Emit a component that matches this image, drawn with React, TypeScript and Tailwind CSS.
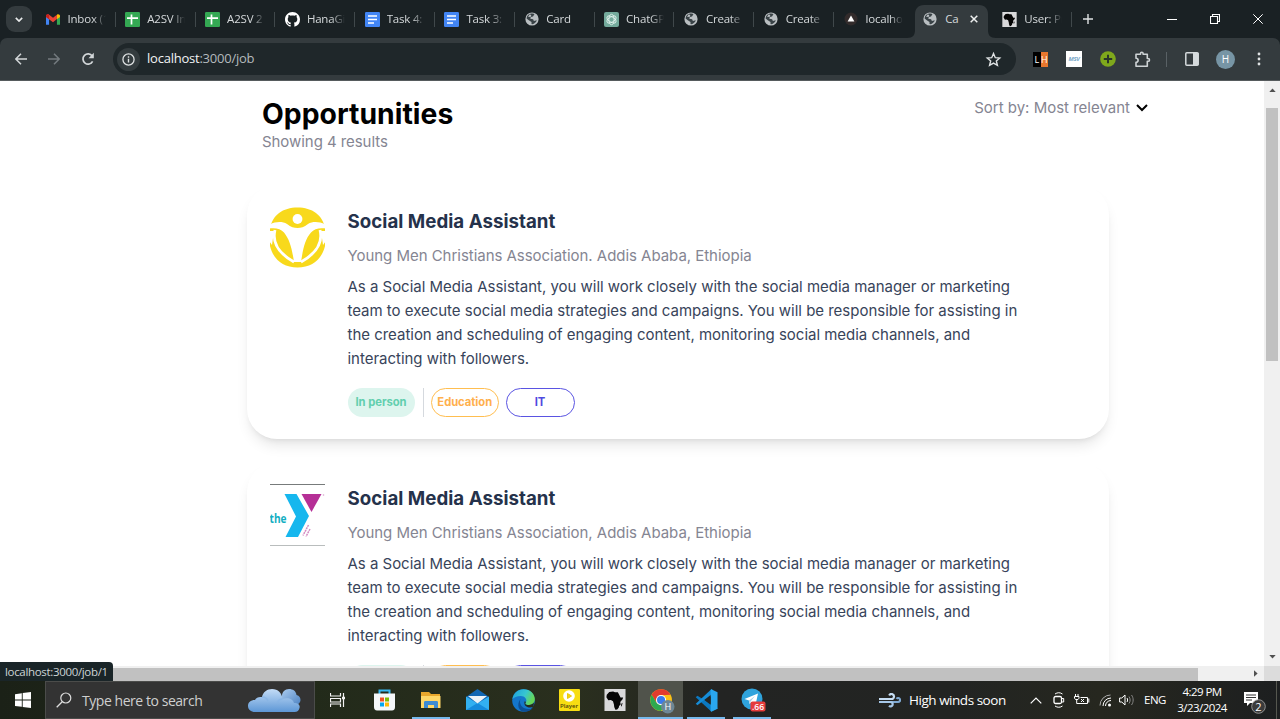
import React from 'react';
import type { ReactNode } from 'react';

const AFRICA =
  'M5 3.2 9 2.6l2 .9 3-.2 1.2 2.5 1.6 3 2.7.2-.6 1.8-2.4 2.8.4 2.6-1.7 1.5-.2 1.6-1.7 2.2-1.9.3-1.2-3-.3-2.7-1-3.4-2.2-1.2-2.7.3L2 8.6 2.4 6z';

const Africa = ({ className }: { className: string }) => (
  <svg viewBox="0 0 22 23" className={className}>
    <rect width="22" height="23" fill="#d9d9db" />
    <path d={AFRICA} fill="#050505" />
    <path d="M17.6 15.5l1.3-1-.7 3.3-.9.4z" fill="#050505" />
  </svg>
);

const Gmail = () => (
  <svg viewBox="0 0 16 12" className="h-[11px] w-[14px]">
    <path d="M0 2v10h3.5V5z" fill="#4285f4" />
    <path d="M12.5 5v7H16V2z" fill="#34a853" />
    <path d="M0 2C0 .3 2-.6 3.5.5L8 4 12.5.5v5L8 9 0 3.2z" fill="#ea4335" />
    <path d="M12.5.5C14-.6 16 .3 16 2v1.2l-3.5 2.6z" fill="#fbbc04" />
    <path d="M0 2v1.2l3.5 2.6V.5C2-.6 0 .3 0 2z" fill="#c5221f" />
  </svg>
);

const Sheet = () => (
  <svg viewBox="0 0 15 15" className="size-[15px]">
    <rect width="15" height="15" rx="1.2" fill="#34a853" />
    <path d="M6.5 2.5v10M2 6.2h11" stroke="#fff" strokeWidth="1.7" />
  </svg>
);

const Doc = () => (
  <svg viewBox="0 0 15 15" className="size-[15px]">
    <rect width="15" height="15" rx="1.2" fill="#4285f4" />
    <path d="M3 4h9M3 7.5h9M3 11h6" stroke="#fff" strokeWidth="1.7" />
  </svg>
);

const Github = () => (
  <svg viewBox="0 0 16 16" className="size-[15px]">
    <path
      fill="#fff"
      d="M8 0C3.58 0 0 3.58 0 8c0 3.54 2.29 6.53 5.47 7.59.4.07.55-.17.55-.38 0-.19-.01-.82-.01-1.49-2.01.37-2.53-.49-2.69-.94-.09-.23-.48-.94-.82-1.13-.28-.15-.68-.52-.01-.53.63-.01 1.08.58 1.23.82.72 1.21 1.87.87 2.33.66.07-.52.28-.87.51-1.07-1.78-.2-3.64-.89-3.64-3.95 0-.87.31-1.59.82-2.15-.08-.2-.36-1.02.08-2.12 0 0 .67-.21 2.2.82.64-.18 1.32-.27 2-.27s1.36.09 2 .27c1.53-1.04 2.2-.82 2.2-.82.44 1.1.16 1.92.08 2.12.51.56.82 1.27.82 2.15 0 3.07-1.87 3.75-3.65 3.95.29.25.54.73.54 1.48 0 1.07-.01 1.93-.01 2.2 0 .21.15.46.55.38A8.01 8.01 0 0 0 16 8c0-4.42-3.58-8-8-8"
    />
  </svg>
);

const Globe = () => (
  <svg viewBox="0 0 14 14" className="size-[14px]">
    <circle cx="7" cy="7" r="6.6" fill="#b9bec1" />
    <path d="M6.2 1.6c1.6 0 3 .1 3.2.7L8 4.6 5.8 5l-.5 1.7 2.8.6.8 1.6 2.9-.6c-.7 2-2.4 3.5-4.4 3.9l-.9-.1V10L3.8 8.3 1.6 6.5c.2-2.500 2.200-4.700 4.600-4.900z" fill="#394246" />
    <path d="M3 4.800l1.800-2.500 1.500 1-.7 1.700z" fill="#b9bec1" />
  </svg>
);

const ChatGpt = () => (
  <svg viewBox="0 0 15 15" className="size-[15px]">
    <rect width="15" height="15" rx="2" fill="#74aa9c" />
    <g fill="none" stroke="#e4f3ee" strokeWidth=".85">
      <ellipse cx="7.500" cy="7.500" rx="2.600" ry="5.200" />
      <ellipse cx="7.500" cy="7.500" rx="2.600" ry="5.200" transform="rotate(60 7.500 7.500)" />
      <ellipse cx="7.500" cy="7.500" rx="2.600" ry="5.200" transform="rotate(120 7.500 7.500)" />
    </g>
  </svg>
);

const Vercel = () => (
  <svg viewBox="0 0 14 14" className="size-[14px]">
    <circle cx="7" cy="7" r="6.500" fill="#322b2b" />
    <path d="M7 3.600l3.400 5.900H3.600z" fill="#fff" />
  </svg>
);

const tabs: { icon: ReactNode; label: string }[] = [
  { icon: <Gmail />, label: 'Inbox (1' },
  { icon: <Sheet />, label: 'A2SV In' },
  { icon: <Sheet />, label: 'A2SV 2' },
  { icon: <Github />, label: 'HanaGi' },
  { icon: <Doc />, label: 'Task 4:' },
  { icon: <Doc />, label: 'Task 3:' },
  { icon: <Globe />, label: 'Card' },
  { icon: <ChatGpt />, label: 'ChatGP' },
  { icon: <Globe />, label: 'Create' },
  { icon: <Globe />, label: 'Create' },
  { icon: <Vercel />, label: 'localho' },
];

const fade =
  'overflow-hidden whitespace-nowrap [mask-image:linear-gradient(to_right,#000_65%,transparent)]';

function TabStrip() {
  return (
    <div className="flex h-[38px] shrink-0 bg-[#1a2124] text-[11.5px] tracking-[-0.200px] text-[#d5d9db]">
      <div className="flex w-[36px] shrink-0 items-center pl-[6px]">
        <div className="flex size-[26px] items-center justify-center rounded-[9px] bg-[#343b3e]">
          <svg viewBox="0 0 10 6" className="h-[5px] w-[8px]">
            <path d="M1 1l4 4 4-4" fill="none" stroke="#e8eaeb" strokeWidth="2" />
          </svg>
        </div>
      </div>
      {tabs.map((t, i) => (
        <div key={i} className="flex w-[79.800px] shrink-0 items-center pl-[9.500px]">
          <span className="flex w-[15px] justify-center">{t.icon}</span>
          <span className={`ml-[7px] w-[38px] ${fade}`}>{t.label}</span>
          {i < 10 && <span className="ml-auto h-[15px] w-px bg-[#40484b]" />}
        </div>
      ))}
      <div className="flex w-[83px] shrink-0 items-end">
        <svg viewBox="0 0 84 33" className="-mr-[84px] h-[33px] w-[84px] shrink-0 overflow-visible">
          <path d="M-7 33c6 0 8-3 8-8V9c0-5 3-9 9-9h55c6 0 9 4 9 9v16c0 5 2 8 8 8z" fill="#343b3e" />
        </svg>
        <div className="relative flex h-[38px] items-center pl-[9.500px]">
          <Globe />
          <span className="ml-[8px] w-[14px] overflow-hidden whitespace-nowrap">Ca</span>
          <svg viewBox="0 0 8 8" className="ml-[11px] size-[8px]">
            <path d="M.7.7l6.600 6.600M7.300.7L.7 7.300" stroke="#eef0f0" strokeWidth="1.500" />
          </svg>
        </div>
      </div>
      <div className="flex w-[79px] shrink-0 items-center pl-[5.500px]">
        <Africa className="size-[15px]" />
        <span className={`ml-[7px] w-[38px] ${fade}`}>User: Pr</span>
        <span className="ml-auto mr-[4px] h-[15px] w-px bg-[#40484b]" />
      </div>
      <div className="flex items-center pl-[7px]">
        <svg viewBox="0 0 10 10" className="size-[10px]">
          <path d="M5 0v10M0 5h10" stroke="#dfe2e3" strokeWidth="1.400" />
        </svg>
      </div>
      <div className="ml-auto flex items-center gap-[33px] pr-[17px]">
        <svg viewBox="0 0 10 10" className="size-[10px]">
          <path d="M0 5.500h10" stroke="#fff" />
        </svg>
        <svg viewBox="0 0 10 10" className="size-[10px]">
          <path d="M.5 2.500h7v7h-7zM2.500 2.500v-2h7v7h-2" fill="none" stroke="#fff" strokeWidth="1.100" />
        </svg>
        <svg viewBox="0 0 10 10" className="size-[10px]">
          <path d="M.3.3l9.400 9.400M9.700.3L.3 9.700" stroke="#fff" />
        </svg>
      </div>
    </div>
  );
}

function Toolbar() {
  return (
    <div className="flex h-[43px] shrink-0 bg-[#1a2124]">
      <div className="flex w-full items-center rounded-t-[7px] border-b border-[#565b5d] bg-[#343b3e]">
        <svg viewBox="0 0 12 12" className="ml-[15px] size-[12px]">
          <path d="M12 6H1M6 .8L.8 6 6 11.200" fill="none" stroke="#d3d7d9" strokeWidth="1.500" />
        </svg>
        <svg viewBox="0 0 12 12" className="ml-[21px] size-[12px]">
          <path d="M0 6h11M6 .8L11.200 6 6 11.200" fill="none" stroke="#747b7f" strokeWidth="1.500" />
        </svg>
        <svg viewBox="0 0 14 14" className="ml-[21px] size-[14px]">
          <path d="M11.600 9.400A5.100 5.100 0 1 1 11.200 4" fill="none" stroke="#d3d7d9" strokeWidth="1.700" />
          <path d="M12.800.8v5.400H7.500z" fill="#d3d7d9" />
        </svg>
        <div className="ml-[18px] flex h-[32px] w-[903px] items-center rounded-full bg-[#1f272a] pl-[4px] pr-[14px]">
          <span className="flex size-[23px] items-center justify-center rounded-full bg-[#343c3f]">
            <svg viewBox="0 0 14 14" className="size-[13px]">
              <circle cx="7" cy="7" r="6" fill="none" stroke="#dfe2e3" strokeWidth="1.400" />
              <path d="M7 6.200v4M7 3.500v1.500" stroke="#dfe2e3" strokeWidth="1.500" />
            </svg>
          </span>
          <span className="ml-[7px] text-[13px] tracking-[-0.230px] text-[#b4babd]">
            <span className="text-[#f1f3f4]">localhost</span>:3000/job
          </span>
          <svg viewBox="0 0 24 24" className="ml-auto size-[17px]">
            <path d="M12 3.500l2.500 5.900 6.300.500-4.800 4.200 1.500 6.200L12 17l-5.500 3.300L8 14.100 3.200 9.900l6.300-.5z" fill="none" stroke="#dfe2e3" strokeWidth="2" />
          </svg>
        </div>
        <div className="ml-[17px] flex h-[15px] w-[15px] text-[9px] leading-[16px] text-white">
          <span className="flex w-[7.500px] justify-center bg-black">L</span>
          <span className="flex w-[7.500px] justify-center bg-[#e8772e]">H</span>
        </div>
        <div className="ml-[18px] flex size-[16px] items-center justify-center bg-white text-[6px] font-bold italic tracking-[-0.300px] text-[#79a9c9]">
          MSV
        </div>
        <svg viewBox="0 0 16 16" className="ml-[17.500px] size-[16px]">
          <circle cx="8" cy="8" r="7.800" fill="#7fa81c" />
          <path d="M8 3.800v8.400M3.800 8h8.400" stroke="#29352a" strokeWidth="2" />
        </svg>
        <svg viewBox="0 0 17 17" className="ml-[18px] size-[17px]">
          <path
            d="M2 3.300h4.500V2.500a1.300 1.300 0 0 1 2.600 0v.8h4.200v4.200h.8a1.400 1.400 0 0 1 0 2.800h-.8v4.900H2v-3.900c2.800 0 2.800-4 0-4z"
            fill="none"
            stroke="#ced3d5"
            strokeWidth="1.600"
            strokeLinejoin="round"
          />
        </svg>
        <span className="ml-[15.500px] h-[15px] w-px bg-[#596165]" />
        <svg viewBox="0 0 14 14" className="ml-[18px] size-[14px]">
          <rect x=".8" y=".8" width="12.400" height="12.400" rx="1" fill="none" stroke="#d5dadc" strokeWidth="1.500" />
          <path d="M8 1h5.500v12H8z" fill="#d5dadc" />
        </svg>
        <span className="ml-[17px] flex size-[19px] items-center justify-center rounded-full bg-[#7795a5] text-[10px] text-white">H</span>
        <svg viewBox="0 0 4 14" className="ml-[22px] h-[14px] w-[4px]">
          <g fill="#dfe2e3">
            <circle cx="2" cy="2" r="1.400" />
            <circle cx="2" cy="7" r="1.400" />
            <circle cx="2" cy="12" r="1.400" />
          </g>
        </svg>
      </div>
    </div>
  );
}

const FigureLogo = () => (
  <svg viewBox="0 0 55 61" preserveAspectRatio="none" className="h-[61px] w-[55px]">
    <path d="M0 22C2 8 13 .5 27.500.5S53 8 55 22v17c-3 13-13 21.500-27.500 21.500S3 52 0 39z" fill="#f8d91c" />
    <circle cx="27.500" cy="12" r="4.900" fill="#fff" />
    <path
      d="M-1 18C5 14.500 12 14 17 17c4 3 7 4 10.500 4s6.500-1 10.500-4c5-3 12-2.500 18 1v3.500c-6-1-12 0-15 4C35 32 33 42 31 55h-7c-2-13-4-22-10-29.500-3-4-9-5-15-4z"
      fill="#fff"
    />
    <path d="M5 23C2 35 8 46 24 55M50 23c3 12-3 23-19 32" fill="none" stroke="#fff" strokeWidth="2.800" />
    <path d="M-1 24h5L2 38l-3-4zM56 24h-5l2 14 3-4z" fill="#fff" />
  </svg>
);

const YLogo = () => (
  <div className="h-[62px] w-[55.500px] border-b border-t border-b-[#b9bdbd] border-t-[#777b7b]">
    <svg viewBox="0 0 56 60" className="h-[60px] w-[56px]">
      <path d="M14.500 9H26.500L39 31 28 52H15.500L26 31.500z" fill="#16b7ee" />
      <path d="M31.500 9H51.500L41.500 27z" fill="#b52f96" />
      <text x="-.5" y="37.500" fontSize="11.500" fontWeight="700" fill="#12aec2" fontFamily="Open Sans, sans-serif" textLength="17" lengthAdjust="spacingAndGlyphs">
        the
      </text>
      <path d="M38.500 40l-5.500 10.500M40 44l-4 7.500" stroke="#d48bc2" strokeWidth="1.500" strokeDasharray="2 .7" />
      <circle cx="53.500" cy="10" r=".8" fill="#d8a4cc" />
    </svg>
  </div>
);

const description = [
  'As a Social Media Assistant, you will work closely with the social media manager or marketing',
  'team to execute social media strategies and campaigns. You will be responsible for assisting in',
  'the creation and scheduling of engaging content, monitoring social media channels, and',
  'interacting with followers.',
];

function JobCard({ logo, company }: { logo: ReactNode; company: string }) {
  return (
    <article className="flex h-[254px] w-[861.500px] shrink-0 rounded-[30px] bg-white pl-[22.500px] pt-[22px] shadow-[0_9px_14px_-3px_rgba(0,0,0,0.1),0_4px_6px_-4px_rgba(0,0,0,0.1)]">
      <div className="w-[78px] shrink-0">{logo}</div>
      <div className="whitespace-nowrap">
        <h2 className="mt-px h-[28px] text-[18.700px] font-bold leading-[28px] tracking-[0.030px] text-[#25324b]">Social Media Assistant</h2>
        <p className="mt-[8px] h-[24px] text-[15px] leading-[24px] tracking-[-0.035px] text-[#858592]">{company}</p>
        <div className="mt-[7px] text-[15px] leading-[24px] tracking-[-0.018px] text-[#38445a]">
          {description.map((line) => (
            <p key={line}>{line}</p>
          ))}
        </div>
        <div className="mt-[16.500px] flex h-[29px] text-[11.250px] font-bold tracking-[-0.050px]">
          <span className="flex w-[67px] items-center justify-center rounded-full bg-[#ddf5ee] text-[#62cfae]">In person</span>
          <span className="ml-[8px] w-px bg-[#d5d9de]" />
          <span className="ml-[7.500px] flex w-[67.500px] items-center justify-center rounded-full border border-[#ffbe50] text-[#ffb04d]">Education</span>
          <span className="ml-[7px] flex w-[69px] items-center justify-center rounded-full border border-[#5a54e2] text-[#4f49e0]">IT</span>
        </div>
      </div>
    </article>
  );
}

function Page() {
  return (
    <main className="h-[585px] w-[1264px] overflow-hidden bg-white pl-[247px] font-[Inter,sans-serif]">
      <header className="flex h-[104px] justify-between pl-[15px] pr-[116px] pt-[14px]">
        <div>
          <h1 className="h-[36px] text-[28.300px] font-bold leading-[38px] tracking-[0.030px] text-black">Opportunities</h1>
          <p className="text-[15px] leading-[22px] tracking-[-0.060px] text-[#858592]">Showing 4 results</p>
        </div>
        <div className="flex h-[26px] items-center gap-[6px] text-[15px] text-[#858592]">
          Sort by: Most relevant
          <svg viewBox="0 0 12 8" className="h-[8px] w-[12px]">
            <path d="M1 1l5 5 5-5" fill="none" stroke="#000" strokeWidth="2" />
          </svg>
        </div>
      </header>
      <div className="flex flex-col gap-[23px]">
        <JobCard logo={<FigureLogo />} company="Young Men Christians Association. Addis Ababa, Ethiopia" />
        <JobCard logo={<YLogo />} company="Young Men Christians Association, Addis Ababa, Ethiopia" />
      </div>
    </main>
  );
}

function VerticalScroll() {
  return (
    <div className="flex h-[585px] w-[16px] flex-col items-center bg-[#f0f0f0] pt-[7px]">
      <svg viewBox="0 0 8 5" className="h-[4px] w-[7px]">
        <path d="M0 5l4-4.500L8 5z" fill="#505050" />
      </svg>
      <div className="mt-[16px] h-[253px] w-[12px] bg-[#c1c1c1]" />
      <svg viewBox="0 0 8 5" className="mb-[7px] mt-auto h-[4px] w-[7px]">
        <path d="M0 0l4 4.500L8 0z" fill="#505050" />
      </svg>
    </div>
  );
}

function HorizontalScroll() {
  return (
    <div className="flex h-[15px] shrink-0 bg-[#f0f0f0]">
      <div className="flex w-[1264px] items-center">
        <div className="mt-px h-[13px] w-[1198px] bg-[#c1c1c1]" />
        <svg viewBox="0 0 5 8" className="ml-[56px] h-[7px] w-[4px]">
          <path d="M0 0l4.500 4L0 8z" fill="#505050" />
        </svg>
      </div>
      <div className="w-[16px] bg-[#dcdcdc]" />
    </div>
  );
}

const Cloud = () => (
  <svg viewBox="0 0 53 25" className="h-[25px] w-[53px]">
    <defs>
      <linearGradient id="cloud" x1="0" y1="0" x2="0" y2="1">
        <stop offset="0" stopColor="#c3dcf7" />
        <stop offset="1" stopColor="#5d97d6" />
      </linearGradient>
      <linearGradient id="cloudBack" x1="0" y1="0" x2="1" y2="1">
        <stop offset="0" stopColor="#a9cbf0" />
        <stop offset="1" stopColor="#4e83c2" />
      </linearGradient>
    </defs>
    <path d="M34 17V8c0-4 3-7 7-7 4 0 7 2 7.500 6 3 .5 4 3 4 5s-2 5-5 5z" fill="url(#cloudBack)" />
    <path d="M7 24c-4 0-7-2.500-7-6 0-3.500 2.500-6 7-6 1-2.500 4-3.500 7-3C15 4 19 1 24 1c6 0 10 4 10.500 10C40 9 45 11 46 15c4 0 6.500 2 5.500 5-.7 2.500-2 4-5 4z" fill="url(#cloud)" />
    <path d="M14 9c3 0 5 1 6 4M34.500 11c-2 0-4 1-5 3" stroke="#86b4e5" strokeWidth="1.500" fill="none" opacity=".7" />
  </svg>
);

const TaskView = () => (
  <svg viewBox="0 0 16 14" className="h-[14px] w-[16px]">
    <g fill="none" stroke="#f2f2f2">
      <path d="M.5 0v3h10V0M.5 14v-3h10v3M.5 5.500h10v3.500H.5zM13.500 0v14" strokeWidth="1.200" />
      <path d="M12 5h3" strokeWidth="2.500" />
    </g>
  </svg>
);

const Store = () => (
  <svg viewBox="0 0 23 22" className="h-[22px] w-[23px]">
    <path d="M6.500 6V1.500h10V6" fill="none" stroke="#37b8f2" strokeWidth="2" />
    <path d="M1 4.500h21V18c0 2-1 3.500-3 3.500H4c-2 0-3-1.500-3-3.500z" fill="#f5f7f9" />
    <path d="M7 8.500h4v4H7z" fill="#f35325" />
    <path d="M12 8.500h4v4h-4z" fill="#81bc06" />
    <path d="M7 13.500h4v4H7z" fill="#05a6f0" />
    <path d="M12 13.500h4v4h-4z" fill="#ffba08" />
  </svg>
);

const Explorer = () => (
  <svg viewBox="0 0 22 18" className="h-[18px] w-[22px]">
    <path d="M1 1h8l2 2h9v4H1z" fill="#e9a72c" />
    <path d="M1 5h19.500v12H1z" fill="#ffd768" />
    <path d="M4 17V11.500c0-1 .5-1.500 1.500-1.500h11c1 0 1.500.5 1.500 1.500V17h-4v-3H8v3z" fill="#3d8bd3" />
  </svg>
);

const Mail = () => (
  <svg viewBox="0 0 23 22" className="h-[22px] w-[23px]">
    <path d="M0 8L11.500 0 23 8v12H0z" fill="#1267b4" />
    <path d="M0 7.500l11.500 7L23 7.500V21H0z" fill="#32b0f1" />
    <path d="M0 21l11.500-7L23 21z" fill="#168bdc" />
    <path d="M2 7h19l-9.500 7.500z" fill="#edf3f8" />
  </svg>
);

const Edge = () => (
  <svg viewBox="0 0 23 23" className="size-[23px]">
    <defs>
      <linearGradient id="edgeTop" x1="0" y1="0" x2="1" y2=".4">
        <stop offset="0" stopColor="#1b9de2" />
        <stop offset=".6" stopColor="#37c6d0" />
        <stop offset="1" stopColor="#66d657" />
      </linearGradient>
    </defs>
    <circle cx="11.500" cy="11.500" r="11.300" fill="#1476cb" />
    <path d="M.4 10C1.500 4 6 .2 11.500.2c7 0 11.300 5 11.300 9.800 0 4-3 6-6 6-3.500 0-4-1.500-3-2.500 2-3-1-6.500-5-6.500-4 0-7 1.500-8.400 3z" fill="url(#edgeTop)" />
    <path d="M8.500 10c-2 5 2 10 8 10 2 0 3.500-.6 4.500-1.300-2 2.600-5 4.100-8.500 4.100C7 22.800 4 16 8.500 10z" fill="#0c4f96" />
    <path d="M13.800 13.500c-1 1-.5 2.500 3 2.500 2 0 4-.8 5.200-2.400l-.6 4.200c-4 2-9 0-9-3.800 0-1.700.7-2.500 1.400-.5z" fill="#262b1e" />
  </svg>
);

const Player = () => (
  <div className="flex h-[22px] w-[21px] flex-col items-center rounded-[1px] bg-[#f7dd12] pt-[1px]">
    <svg viewBox="0 0 12 12" className="size-[12px] shrink-0">
      <circle cx="6" cy="6" r="5.800" fill="#fff" />
      <path d="M4.500 3.500L8.500 6l-4 2.500z" fill="#f3d311" stroke="#e9c90a" />
    </svg>
    <span className="text-[6px] font-semibold leading-[8px] text-[#4c430b]">Player</span>
  </div>
);

const Chrome = () => (
  <svg viewBox="0 0 26 26" className="-mb-[2px] ml-[3px] size-[25px]">
    <circle cx="11.500" cy="11.500" r="11.300" fill="#fbc116" />
    <path d="M1.700 5.900A11.300 11.300 0 0 1 21.300 5.900L11.500 6.500 7 14.500z" fill="#e33b2e" />
    <path d="M1.700 5.900A11.300 11.300 0 0 0 11.500 22.800L16.500 14 7 14.500z" fill="#2da94f" />
    <circle cx="11.500" cy="11.500" r="5.300" fill="#fff" />
    <circle cx="11.500" cy="11.500" r="4.200" fill="#3a7bec" />
    <circle cx="18.500" cy="18.500" r="7" fill="#6d8796" />
    <text x="18.500" y="22" fontSize="9.500" fill="#fff" textAnchor="middle" fontFamily="Open Sans, sans-serif">
      H
    </text>
  </svg>
);

const Code = () => (
  <svg viewBox="0 0 24 24" className="size-[23px]">
    <path d="M.8 8.500L2.500 7 24 20l-7 3.500z" fill="#0b78c0" />
    <path d="M.8 15.500L2.500 17 18 5V.5L17 .3z" fill="#168dd8" />
    <path d="M17 .3l6.500 3v17.400l-6.500 3c-.5-.3-.7-.7-.7-1.200V1.500c0-.5.300-1 .700-1.200z" fill="#2aa7f0" />
    <path d="M16.300 7.500v9L10.500 12z" fill="#222422" />
  </svg>
);

const Telegram = () => (
  <svg viewBox="0 0 25 25" className="ml-[2px] size-[25px]">
    <circle cx="11" cy="11" r="10.500" fill="#2fa3dc" />
    <path d="M3.500 11L17 5.500 14.500 17l-4-3-2 2-.5-3.500z" fill="#fff" />
    <path d="M8 12.500l6-4.500-4.500 5.500-.5 2.500z" fill="#a9cfe4" />
    <rect x="9.500" y="13.500" width="15" height="10" rx="2" fill="#e63b3b" />
    <text x="17" y="22" fontSize="8.500" fontWeight="600" fill="#fff" textAnchor="middle" fontFamily="Open Sans, sans-serif">
      .66
    </text>
  </svg>
);

const apps: { icon: ReactNode; open?: boolean; active?: boolean }[] = [
  { icon: <Explorer />, open: true },
  { icon: <Mail /> },
  { icon: <Edge /> },
  { icon: <Player /> },
  { icon: <Africa className="h-[22px] w-[22px]" /> },
  { icon: <Chrome />, open: true, active: true },
  { icon: <Code />, open: true },
  { icon: <Telegram />, open: true },
];

function Tray() {
  return (
    <div className="ml-auto flex h-full items-center text-white">
      <svg viewBox="0 0 22 15" className="h-[15px] w-[22px] shrink-0">
        <g fill="none" strokeWidth="2.200">
          <path d="M0 6h12.500a2.500 2.500 0 1 0-2.300-3.500" stroke="#c6ddf3" />
          <path d="M9 9h10a2 2 0 1 0-1.500-3.200" stroke="#7fa9d3" />
          <path d="M0 9h11.500a2.200 2.200 0 1 1-1.500 3.800" stroke="#a6c7e8" />
        </g>
      </svg>
      <span className="ml-[8px] w-[97px] whitespace-nowrap text-[13.500px] tracking-[-0.470px]">High winds soon</span>
      <svg viewBox="0 0 12 7" className="ml-[24px] h-[7px] w-[12px]">
        <path d="M.7 6.300L6 1l5.300 5.300" fill="none" stroke="#fff" strokeWidth="1.200" />
      </svg>
      <svg viewBox="0 0 12 16" className="ml-[11px] h-[16px] w-[12px]">
        <g fill="none" stroke="#fff">
          <path d="M2 2C4.500.3 7 .3 9.500 2M2 14c2.500 1.700 5 1.700 7.500 0" />
          <rect x="1" y="4.500" width="7.500" height="7" rx="1.500" strokeWidth="1.300" />
          <path d="M8.500 6.500h2.200v3.500H8.500" />
        </g>
      </svg>
      <svg viewBox="0 0 16 12" className="ml-[9px] h-[12px] w-[16px]">
        <g fill="none" stroke="#fff">
          <path d="M1.500 0v2.500M4 0v2.500M.5 2.500h4.500v1.700l-1 1.300H1.500L.5 4.200zM2.700 5.500v4h10.800v-6H6.500" />
          <path d="M14.800 4.500v4M7 5l3 3M10 5l-3 3" />
        </g>
      </svg>
      <svg viewBox="0 0 13 13" className="ml-[9px] size-[13px]">
        <g fill="none" stroke="#fff">
          <path d="M1 11.500A10.500 10.500 0 0 1 11.500 1" stroke="#aaa" />
          <path d="M4 12A8 8 0 0 1 12 4" />
          <path d="M6.500 12A5.500 5.500 0 0 1 12 6.500" />
        </g>
        <circle cx="10.500" cy="11" r="1.500" fill="#fff" />
      </svg>
      <svg viewBox="0 0 16 12" className="ml-[7px] h-[12px] w-[16px]">
        <g fill="none" stroke="#fff">
          <path d="M.6 4h2.200L6 1v10L2.800 8H.6z" />
          <path d="M8 4c.8 1.200.8 2.800 0 4" />
          <path d="M10 2.500c1.500 2 1.500 5 0 7M12.500 1c2.200 3 2.200 7 0 10" stroke="#888" />
        </g>
      </svg>
      <span className="ml-[9px] w-[22px] text-[11.500px] tracking-[-0.500px]">ENG</span>
      <div className="ml-[9px] w-[54px] text-center text-[11.500px] leading-[16.500px] tracking-[-0.540px]">
        <div>4:29 PM</div>
        <div>3/23/2024</div>
      </div>
      <svg viewBox="0 0 24 24" className="-mb-[3px] ml-[14px] size-[24px]">
        <path d="M1 2h14v11H7l-3 3v-3H1z" fill="#fff" />
        <path d="M3 5h10M3 7.500h10M3 10h6" stroke="#333" />
        <circle cx="15.500" cy="16.500" r="6.800" fill="#3b3b3b" stroke="#aaa" strokeWidth=".8" />
        <text x="15.500" y="20.500" fontSize="11" fill="#fff" textAnchor="middle" fontFamily="Open Sans, sans-serif">
          2
        </text>
      </svg>
      <span className="ml-[9px] mr-[3px] h-full w-px bg-[#55574f]" />
    </div>
  );
}

function Taskbar() {
  return (
    <div className="flex h-[38px] shrink-0 items-center bg-[linear-gradient(to_right,#1b2117,#222a1a_24%,#2a2f1e_45%,#232423_56%,#222422_75%,#26271f_86%,#1d1f20)]">
      <div className="flex w-[45px] justify-center">
        <svg viewBox="0 0 16 16" className="size-[16px]">
          <path d="M0 2.200l6.800-1v6.400H0zM7.700 1L16 0v7.600H7.700zM0 8.500h6.800v6.300L0 13.900zM7.700 8.500H16V16l-8.300-1.100z" fill="#fff" />
        </svg>
      </div>
      <div className="flex h-[38px] w-[270px] items-center border border-[#4b4c4a] bg-[#333333] pl-[10px] pr-[13px]">
        <svg viewBox="0 0 16 16" className="size-[16px]">
          <circle cx="9.800" cy="6" r="5" fill="none" stroke="#ddd" strokeWidth="1.200" />
          <path d="M6.200 9.800L.7 15.300" stroke="#ddd" strokeWidth="1.300" />
        </svg>
        <span className="ml-[10px] whitespace-nowrap text-[14px] tracking-[-0.450px] text-[#cfcfcf]">Type here to search</span>
        <span className="ml-auto"><Cloud /></span>
      </div>
      <div className="flex w-[45px] justify-center"><TaskView /></div>
      <div className="flex w-[48px] justify-center"><Store /></div>
      {apps.map((a, i) => (
        <div key={i} className={`flex h-[38px] flex-col items-center ${a.active ? 'w-[45px] bg-[#50534b]' : 'w-[46px]'}`}>
          <div className="flex h-[36px] items-center pt-[2px]">{a.icon}</div>
          {a.open && <div className={`h-[2px] bg-[#76b9ed] ${a.active ? 'w-full' : 'w-[38px]'}`} />}
        </div>
      ))}
      <Tray />
    </div>
  );
}

export default function App() {
  return (
    <div className="relative flex h-[719px] w-[1280px] flex-col overflow-hidden bg-white font-['Open_Sans','Noto_Sans',sans-serif]">
      <TabStrip />
      <Toolbar />
      <div className="flex h-[585px] shrink-0">
        <Page />
        <VerticalScroll />
      </div>
      <HorizontalScroll />
      <Taskbar />
      <div className="absolute bottom-[38px] left-0 flex h-[19px] w-[113px] items-center rounded-tr-[4px] bg-[#1a2528] pl-[5px] text-[11.500px] tracking-[-0.330px] text-[#cdd4d6]">
        localhost:3000/job/1
      </div>
    </div>
  );
}
